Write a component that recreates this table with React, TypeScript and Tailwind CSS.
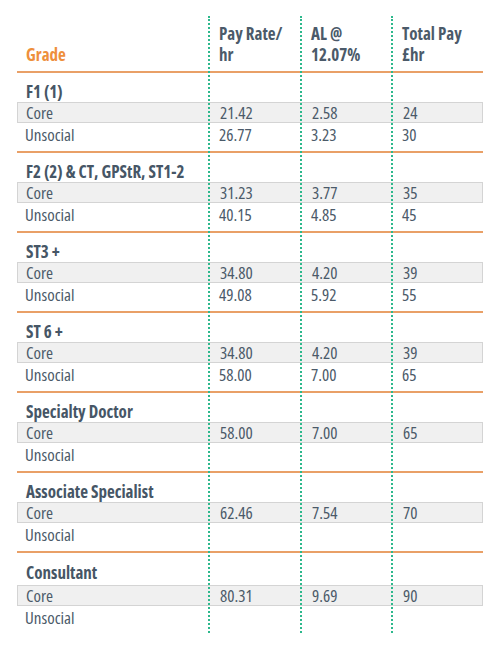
import React from "react";

type Row = { label: string; vals: string[] };
type Group = { title: string; core: string[]; unsocial: string[] };

const groups: Group[] = [
  { title: "F1 (1)", core: ["21.42", "2.58", "24"], unsocial: ["26.77", "3.23", "30"] },
  { title: "F2 (2) & CT, GPStR, ST1-2", core: ["31.23", "3.77", "35"], unsocial: ["40.15", "4.85", "45"] },
  { title: "ST3 +", core: ["34.80", "4.20", "39"], unsocial: ["49.08", "5.92", "55"] },
  { title: "ST 6 +", core: ["34.80", "4.20", "39"], unsocial: ["58.00", "7.00", "65"] },
  { title: "Specialty Doctor", core: ["58.00", "7.00", "65"], unsocial: ["", "", ""] },
  { title: "Associate Specialist", core: ["62.46", "7.54", "70"], unsocial: ["", "", ""] },
  { title: "Consultant", core: ["80.31", "9.69", "90"], unsocial: ["", "", ""] },
];

const cols = "grid grid-cols-[192px_92px_91px_91px]";

function DataRow({ row, shaded }: { row: Row; shaded: boolean }) {
  return (
    <div
      className={
        cols +
        (shaded
          ? " h-[21px] bg-[#f0f0f0] border border-[#d4d4d4] items-center"
          : " h-[22px] items-center")
      }
    >
      <div className="pl-[8px] leading-none">{row.label}</div>
      {row.vals.map((v, i) => (
        <div key={i} className="pl-[10px] leading-none">
          {v}
        </div>
      ))}
    </div>
  );
}

export default function App() {
  return (
    <div className="w-[500px] h-[648px] bg-white">
      <div className="relative ml-[17px] w-[466px] pt-[16px] text-[#4b5a69] text-[17px] font-['Open_Sans',sans-serif] font-stretch-[75%]">
        <div className={cols + " h-[55px] items-end pb-[6px] font-bold leading-[21px]"}>
          <div className="pl-[9px] text-[#ee8f3c]">Grade</div>
          <div className="pl-[10px]">
            Pay Rate/
            <br />
            hr
          </div>
          <div className="pl-[10px]">
            AL @
            <br />
            12.07%
          </div>
          <div className="pl-[10px]">
            Total Pay
            <br />
            £hr
          </div>
        </div>
        {groups.map((g, gi) => (
          <div key={gi}>
            <div className="h-[2px] bg-[#e9a067]" />
            <div className={"flex items-center pl-[9px] pt-[8px] font-bold text-[#465666] " + (gi === groups.length - 1 ? "h-[32px]" : "h-[29px]")}>
              {g.title}
            </div>
            <DataRow row={{ label: "Core", vals: g.core }} shaded />
            <DataRow row={{ label: "Unsocial", vals: g.unsocial }} shaded={false} />
            {gi !== groups.length - 1 && <div className="h-[6px]" />}
          </div>
        ))}
        <div className="h-[5px]" />
        <div className="absolute top-[16px] bottom-0 left-[191px] border-l-2 border-dotted border-[#2db88c]" />
        <div className="absolute top-[16px] bottom-0 left-[283px] border-l-2 border-dotted border-[#2db88c]" />
        <div className="absolute top-[16px] bottom-0 left-[374px] border-l-2 border-dotted border-[#2db88c]" />
      </div>
    </div>
  );
}
